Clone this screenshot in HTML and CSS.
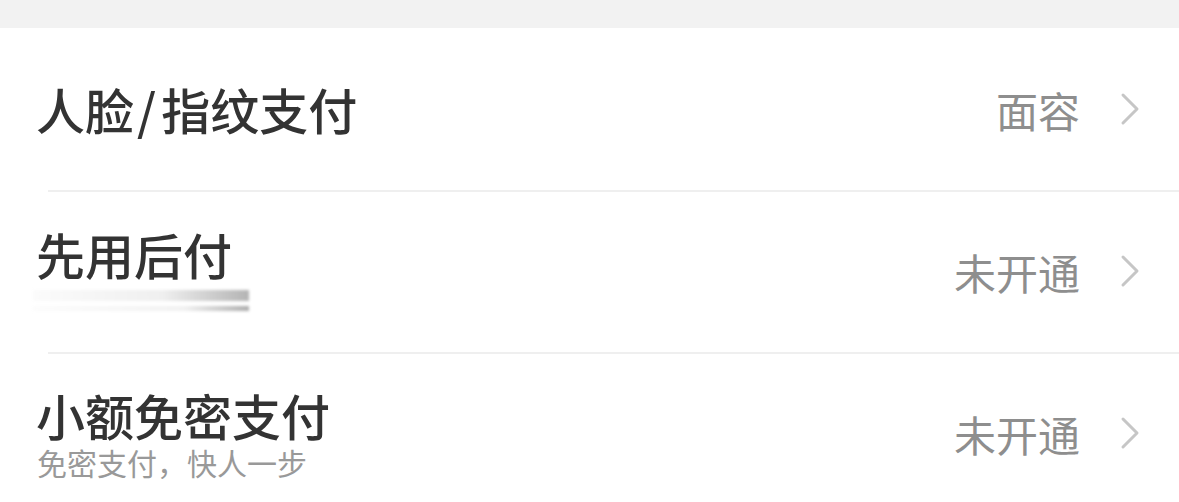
FILE: index.html
```html
<!DOCTYPE html>
<html lang="zh">
<head>
    <meta charset="UTF-8">
    <meta name="viewport" content="width=device-width, initial-scale=1.0">
    <title>支付设置</title>
    <link rel="stylesheet" href="styles.css">
</head>
<body>
    <div class="topbar"></div>

    <ul class="list">
        <li class="item">
            <div class="main">
                <div class="title">人脸<span class="slash">/</span>指纹支付</div>
            </div>
            <div class="value">面容</div>
            <svg class="arrow" viewBox="0 0 20 34"><path d="M3 3 L17 17 L3 31" /></svg>
        </li>
        <li class="item">
            <div class="main">
                <div class="title">先用后付</div>
                <div class="blur">
                    <span class="line line-a"></span>
                    <span class="line line-b"></span>
                </div>
            </div>
            <div class="value">未开通</div>
            <svg class="arrow" viewBox="0 0 20 34"><path d="M3 3 L17 17 L3 31" /></svg>
        </li>
        <li class="item">
            <div class="main">
                <div class="title">小额免密支付</div>
                <div class="desc">免密支付，快人一步</div>
            </div>
            <div class="value">未开通</div>
            <svg class="arrow" viewBox="0 0 20 34"><path d="M3 3 L17 17 L3 31" /></svg>
        </li>
    </ul>
</body>
</html>
```

FILE: styles.css
```css
* {
    margin: 0;
    padding: 0;
    box-sizing: border-box;
}

body {
    font-family: "Noto Sans CJK SC", "Noto Sans", sans-serif;
    background: #ffffff;
    color: #333333;
    overflow: hidden;
}

.topbar {
    height: 28px;
    background: #f2f2f2;
}

.list {
    list-style: none;
}

.item {
    position: relative;
    display: flex;
    align-items: center;
    height: 162px;
    padding: 0 39px 0 36px;
}

.item + .item::before {
    content: "";
    position: absolute;
    top: 0;
    left: 48px;
    right: 0;
    height: 2px;
    background: #efefef;
}

.main {
    flex: 1;
}

.title {
    font-size: 49px;
    font-weight: 500;
    line-height: 54px;
    color: #333333;
}

.slash {
    margin: 0 5px 0 3px;
}

.desc {
    font-size: 30px;
    line-height: 34px;
    color: #999999;
    margin-top: 3px;
    margin-left: 1px;
}

.blur {
    position: relative;
    width: 216px;
    height: 28px;
    margin-top: 6px;
    margin-left: -3px;
    filter: blur(1.5px);
}

.line {
    position: absolute;
    left: 0;
    right: 0;
    display: block;
}

.line-a {
    top: 3px;
    height: 11px;
    background: linear-gradient(to right, #fbfbfb, #efefef 60%, #b4b4b4);
}

.line-b {
    top: 19px;
    height: 5px;
    background: linear-gradient(to right, #fcfcfc, #f1f1f1 70%, #acacac);
}

.value {
    font-size: 42px;
    color: #8e8e8e;
    margin-right: 40px;
}

.arrow {
    width: 20px;
    height: 34px;
    fill: none;
    stroke: #c6c6c6;
    stroke-width: 3px;
    stroke-linecap: round;
    stroke-linejoin: round;
}
```
